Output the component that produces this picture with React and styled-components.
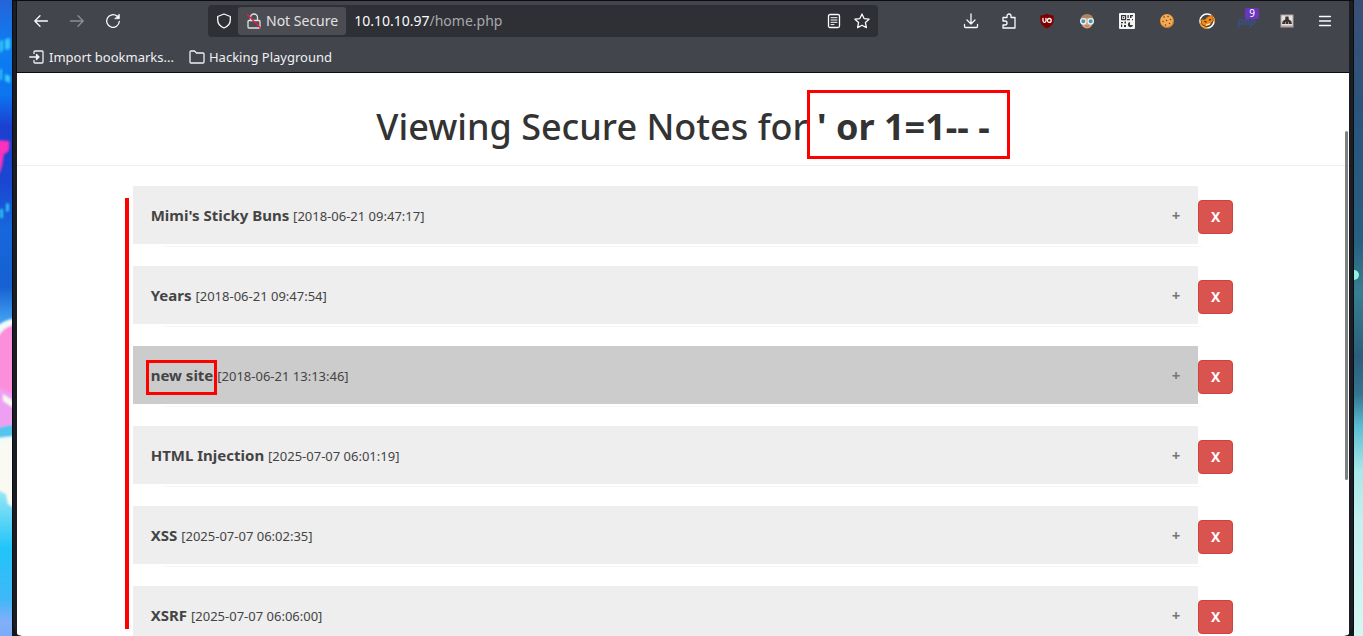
import React from "react";
import styled, { createGlobalStyle } from "styled-components";

const Global = createGlobalStyle`
  * { box-sizing: border-box; }
  body { margin: 0; font-family: "Noto Sans", "Open Sans", sans-serif; }
`;

const Desktop = styled.div`
  display: flex;
  height: 100vh;
  overflow: hidden;
  background: #14171d;
`;

const Wallpaper = styled.svg`
  flex: none;
  width: ${(p) => p.$width}px;
  height: 100%;
  display: block;
`;

const Browser = styled.div`
  flex: 1;
  min-width: 0;
  display: flex;
  flex-direction: column;
  overflow: hidden;
  border: solid #0c0d11;
  border-width: 1px 1px 0;
  border-radius: 0 0 10px 10px;
  background: #1a1d24;
  padding: 0 4px 0 3px;
`;

const Chrome = styled.header`
  flex: none;
  background: #42454c;
  border: solid #0c0d11;
  border-width: 0 0 1px 1px;
  color: #fbfbfe;
`;

const Toolbar = styled.nav`
  display: flex;
  align-items: center;
  height: 40px;
  padding: 0 12px;
`;

const NavGroup = styled.div`
  display: flex;
  gap: 12px;
  width: 179px;
`;

const ToolButton = styled.button`
  position: relative;
  display: grid;
  flex: none;
  place-items: center;
  width: 24px;
  height: 24px;
  padding: 0;
  border: 0;
  background: none;
  color: inherit;
  opacity: ${(p) => (p.disabled ? 0.4 : 1)};
`;

const Glyph = styled.svg`
  display: block;
  flex: none;
  width: 16px;
  height: 16px;
  fill: none;
  stroke: currentColor;
  stroke-width: 1.3;
  stroke-linecap: round;
  stroke-linejoin: round;
`;

const AddressBar = styled.div`
  display: flex;
  align-items: center;
  flex: 0 1 670px;
  height: 32px;
  padding: 0 4px;
  border-radius: 4px;
  background: #2f3036;
`;

const Security = styled.button`
  display: flex;
  align-items: center;
  gap: 4px;
  height: 28px;
  margin-left: 2px;
  padding: 0 8px;
  border: 0;
  border-radius: 3px;
  background: #4c4d52;
  color: #e2e2e5;
  font: 14px/20px "Noto Sans", sans-serif;
  white-space: nowrap;
`;

const Url = styled.div`
  flex: 1;
  min-width: 0;
  padding-left: 8px;
  font-size: 14px;
  line-height: 20px;
  color: #a8a8ad;
  white-space: nowrap;
  span { color: #fbfbfe; }
`;

const ToolGroup = styled.div`
  display: flex;
  align-items: center;
  gap: ${(p) => p.$gap}px;
`;

const WindowTools = styled(ToolGroup)`
  margin-left: auto;
`;

const PhpMark = styled.span`
  color: #3d4d8c;
  font: italic bold 10px/14px "Noto Sans", sans-serif;
`;

const Count = styled.span`
  position: absolute;
  top: -1px;
  left: 10px;
  width: 14px;
  border-radius: 2px;
  background: #6b35c0;
  color: #fff;
  font: 10px/11px "Noto Sans", sans-serif;
`;

const Bookmarks = styled.nav`
  display: flex;
  align-items: center;
  gap: 15px;
  height: 31px;
  padding: 0 12px;
`;

const Bookmark = styled.a`
  display: flex;
  align-items: center;
  gap: 4px;
  color: #f0f0f3;
  font-size: 13px;
  line-height: 20px;
  text-decoration: none;
`;

const Page = styled.main`
  position: relative;
  flex: 1;
  min-height: 0;
  overflow: hidden;
  margin-left: 1px;
  background: #fff;
  color: #333;
`;

const ScrollThumb = styled.div`
  position: absolute;
  top: 58px;
  right: 1px;
  width: 3px;
  height: 62%;
  border-radius: 2px;
  background: #7f8082;
`;

const PageHeader = styled.div`
  padding: 34px 0 19px;
  border-bottom: 1px solid #eee;
  text-align: center;
`;

const Title = styled.h1`
  margin: 0;
  font-size: 36px;
  line-height: 39px;
  font-weight: 500;
`;

const Marked = styled.span`
  position: relative;
  display: inline-block;
  font-weight: bold;
  &::after {
    content: "";
    position: absolute;
    inset: ${(p) => p.$inset};
    border: 3px solid #f00;
  }
`;

const Notes = styled.ul`
  position: relative;
  margin: 20px 0 0;
  padding: 0;
  list-style: none;
  &::before {
    content: "";
    position: absolute;
    top: 12px;
    left: 108px;
    width: 4px;
    height: 431px;
    background: #f00;
  }
`;

const Note = styled.li`
  display: flex;
  justify-content: center;
  align-items: flex-start;
  height: 80px;
`;

const NoteBody = styled.div`
  width: 80%;
`;

const Accordion = styled.button`
  display: flex;
  align-items: center;
  width: 100%;
  height: 58px;
  padding: 0 18px;
  border: 0;
  background: ${(p) => (p.$active ? "#ccc" : "#eee")};
  color: #444;
  font: 15px/20px "Noto Sans", sans-serif;
  text-align: left;
  white-space: pre;
  small { font-size: 13px; }
  i {
    margin-left: auto;
    color: #777;
    font: bold 15px/20px "Noto Sans", sans-serif;
  }
`;

const PanelEdge = styled.div`
  height: 1px;
  margin: 2px -4px 0 31px;
  background: #f7f7f7;
`;

const Delete = styled.button`
  flex: none;
  width: 35px;
  height: 34px;
  margin-top: 14px;
  padding: 0;
  border: 1px solid #d43f3a;
  border-radius: 4px;
  background: #d9534f;
  color: #fff;
  font: bold 14px/20px "Noto Sans", sans-serif;
`;

const notes = [
  ["Mimi's Sticky Buns", "2018-06-21 09:47:17"],
  ["Years", "2018-06-21 09:47:54"],
  ["new site", "2018-06-21 13:13:46"],
  ["HTML Injection", "2025-07-07 06:01:19"],
  ["XSS", "2025-07-07 06:02:35"],
  ["XSRF", "2025-07-07 06:06:00"],
];

const LeftWallpaper = () => (
  <Wallpaper $width={12} viewBox="0 0 12 636" preserveAspectRatio="none" aria-hidden="true">
    <defs>
      <linearGradient id="sky" x1="0" y1="0" x2="0" y2="1">
        <stop offset="0" stopColor="#2563d8" />
        <stop offset=".07" stopColor="#0f7df2" />
        <stop offset=".15" stopColor="#0b74ee" />
        <stop offset=".2" stopColor="#1c3fd0" />
        <stop offset=".29" stopColor="#1a48d2" />
        <stop offset=".36" stopColor="#1767dc" />
        <stop offset=".45" stopColor="#1560d2" />
        <stop offset=".5" stopColor="#3f9bee" />
      </linearGradient>
      <linearGradient id="lower" x1="0" y1="0" x2="0" y2="1">
        <stop offset="0" stopColor="#9be8f5" />
        <stop offset=".35" stopColor="#22c4fa" />
        <stop offset=".65" stopColor="#3fb8f8" />
        <stop offset=".78" stopColor="#84aef8" />
        <stop offset="1" stopColor="#6aa8fa" />
      </linearGradient>
      <filter id="soft" x="-1" y="-.1" width="3" height="1.2"><feGaussianBlur stdDeviation=".8" /></filter>
    </defs>
    <rect width="12" height="636" fill="url(#sky)" />
    <g filter="url(#soft)">
      <path d="M0 41l3-1v10l-3 3zM5 40q2-3 5-1v9q-2 3-5 1zM0 69h2v11H0zM5 74l5 2v7l-5-2z" fill="#35cbfa" />
      <path d="M-4 140l13 1q1 6-1 11l-4 2-2 12-2 7h-4z" fill="#fb30bd" />
      <path d="M0 209h3v9H0zM6 203l3 1v7l-3 1z" fill="#2cc4f5" />
      <path d="M-4 327q7-7 20-9v132H-4z" fill="#effcf8" />
      <path d="M-4 340q8-15 20-15v101H-4z" fill="#fb8fdc" />
      <path d="M-4 386l20 10v36H-4z" fill="#eda0f2" />
      <path d="M3 394l12 8v7l-12-8z" fill="#f8f8ef" />
      <path d="M-4 428l20-4v12l-20 2z" fill="#54c4ee" />
      <path d="M-4 446l20-8v210H-4z" fill="#faf9f2" />
      <path d="M-4 489l10 5 2 10 8 5v150H-4z" fill="url(#lower)" />
    </g>
  </Wallpaper>
);

const RightWallpaper = () => (
  <Wallpaper $width={9} viewBox="0 0 9 636" preserveAspectRatio="none" aria-hidden="true">
    <defs>
      <linearGradient id="dusk" x1="0" y1="0" x2="0" y2="1">
        <stop offset="0" stopColor="#3b4f76" />
        <stop offset=".2" stopColor="#29567d" />
        <stop offset=".38" stopColor="#276080" />
        <stop offset=".46" stopColor="#387f92" />
        <stop offset=".56" stopColor="#2b5e7c" />
        <stop offset=".62" stopColor="#347590" />
        <stop offset=".67" stopColor="#59bed3" />
        <stop offset=".74" stopColor="#a9e8e9" />
        <stop offset=".82" stopColor="#c4f0f0" />
        <stop offset="1" stopColor="#d5f7f2" />
      </linearGradient>
    </defs>
    <rect width="9" height="636" fill="url(#dusk)" />
    <circle cx="0" cy="275" r="5" fill="#90f2e1" />
  </Wallpaper>
);

const Tool = ({ label, disabled, children }) => (
  <ToolButton type="button" aria-label={label} disabled={disabled}>
    {children}
  </ToolButton>
);

export default function App() {
  return (
    <>
      <Global />
      <Desktop>
        <LeftWallpaper />
        <Browser>
          <Chrome>
            <Toolbar>
              <NavGroup>
                <Tool label="Back"><Glyph viewBox="0 0 16 16"><path d="M14.5 8H2M7 2.8L1.8 8 7 13.2" /></Glyph></Tool>
                <Tool label="Forward" disabled><Glyph viewBox="0 0 16 16"><path d="M1.5 8H14M9 2.8L14.2 8 9 13.2" /></Glyph></Tool>
                <Tool label="Reload"><Glyph viewBox="0 0 16 16"><path d="M14.3 8.5A6.3 6.3 0 1 1 12 3.1" /><path d="M14.3 1.5v4.2h-4.2z" fill="currentColor" strokeWidth=".8" /></Glyph></Tool>
              </NavGroup>
              <AddressBar>
                <Tool label="Tracking protection"><Glyph viewBox="0 0 16 16"><path d="M8 1L14.3 3.5V7q0 5.5-6.3 8Q1.7 12.5 1.7 7V3.5z" /></Glyph></Tool>
                <Security type="button">
                  <Glyph viewBox="0 0 16 16"><path d="M4.500 6.500V4.500a3.500 3.500 0 0 1 7 0v3M3 7.500h10a1 1 0 0 1 1 1v5.500a1 1 0 0 1-1 1H3a1 1 0 0 1-1-1V8.500a1 1 0 0 1 1-1z" /><path d="M1.500 1.500l13 13.500" stroke="#f0174f" /></Glyph>
                  Not Secure
                </Security>
                <Url><span>10.10.10.97</span>/home.php</Url>
                <ToolGroup $gap={4}>
                  <Tool label="Reader view"><Glyph viewBox="0 0 16 16"><rect x="2.500" y="1.500" width="11" height="13" rx="1.500" /><path d="M5 4.700h6M5 7h6M5 9.300h6M5 11.600h3" strokeWidth="1" /></Glyph></Tool>
                  <Tool label="Bookmark this page"><Glyph viewBox="0 0 16 16"><path d="M8 1l2.100 4.600 5 .6-3.700 3.400 1 5L8 12.200l-4.400 2.400 1-5L.9 6.200l5-.6z" /></Glyph></Tool>
                </ToolGroup>
              </AddressBar>
              <WindowTools $gap={14}>
                <Tool label="Downloads"><Glyph viewBox="0 0 16 16"><path d="M8 1v10M4 7l4 4 4-4M1.500 11.500v2a1 1 0 0 0 1 1h11a1 1 0 0 0 1-1v-2" /></Glyph></Tool>
                <Tool label="Extensions"><Glyph viewBox="0 0 16 16"><path d="M2 4.500h4V3a2 2 0 0 1 4 0v1.500h4V15H2v-3h2a2 2 0 0 0 0-4H2z" /></Glyph></Tool>
                <ToolGroup $gap={16}>
                  <Tool label="uBlock Origin"><Glyph viewBox="0 0 16 16"><path d="M8 .8Q11 2.500 14.700 2.500V7q0 5.500-6.700 8.500Q1.300 12.500 1.300 7V2.500Q5 2.500 8 .8z" fill="#800000" stroke="none" /><path d="M4 5.500v2.300a1.500 1.500 0 0 0 3 0V5.500" stroke="#fff" /><circle cx="10.300" cy="7.400" r="1.900" stroke="#fff" /></Glyph></Tool>
                  <Tool label="Profile switcher"><Glyph viewBox="0 0 16 16"><ellipse cx="8" cy="8.500" rx="6" ry="7" fill="#dba27d" stroke="none" /><path d="M1.500 7.500Q1.500 1 8 1t6.500 6.500Q12 4.500 8 5 4 4.500 1.500 7.500z" fill="#a98562" stroke="none" /><circle cx="4.300" cy="8.300" r="2.700" fill="#4f98ae" stroke="#e8f4f5" /><circle cx="11.700" cy="8.300" r="2.700" fill="#4f98ae" stroke="#e8f4f5" /><path d="M6.500 13h3" stroke="#b96a55" strokeWidth="1" /></Glyph></Tool>
                  <Tool label="QR code"><Glyph viewBox="0 0 16 16"><rect width="16" height="16" rx="1" fill="#f4f4f4" stroke="none" /><path d="M2.600 2.600h4v4h-4z" stroke="#333" strokeWidth="1.200" /><path d="M4 4h1.200v1.200H4zM8.500 2h1.200v3H8.500zM8 6h3v1.200H8zM11 2h3v1.200h-1.500V5H11zM13 6h1v1.200h-1zM2 9h2v1.200H2zM5.500 8.500h1.500v2H5.500zM2 11.500h1.200v2.500H2zM5 12h2v2H5zM11 9a2.600 2.600 0 1 0 3 3h-3z" fill="#333" stroke="none" /></Glyph></Tool>
                  <Tool label="Cookie editor"><Glyph viewBox="0 0 16 16"><circle cx="8" cy="8" r="7" fill="#d98332" stroke="none" /><circle cx="7.700" cy="7.500" r="6.200" fill="#f0ab55" stroke="none" /><path d="M5 4h.2M9 3.500h.1M11.500 6.500h.1M7.500 7.500h.1M4 8.500h.1M10.500 10.500h.1M6.500 12h.1" stroke="#7e431c" strokeWidth="1.500" /></Glyph></Tool>
                  <Tool label="Proxy"><Glyph viewBox="0 0 16 16"><circle cx="8" cy="8" r="7" stroke="#fff" strokeWidth="1.600" /><path d="M1.500 10.500A7 7 0 0 0 8 15M15 8a7 7 0 0 0-2.500-5.300" stroke="#f08a15" strokeWidth="1.800" strokeDasharray="3 2" /><path d="M2 6.500l4 0 3-3 4.500-1 .5 5-3 4.500-4 1.500-4-2.500z" fill="#f18a16" stroke="#8f4d08" strokeWidth=".5" /><path d="M6 8.500l1 .5M10.500 7l1-.5" stroke="#222" /><path d="M7.500 12l3-1" stroke="#fff" /></Glyph></Tool>
                  <Tool label="PHP tracker"><PhpMark>php</PhpMark><Count>9</Count></Tool>
                  <Tool label="User agent"><Glyph viewBox="0 0 16 16"><rect x="1.500" y="1.500" width="13" height="13" fill="#b0a49d" stroke="none" /><rect x="2.500" y="2.500" width="11" height="10" fill="#e6dfdb" stroke="none" /><path d="M6.500 3.500h3l.3 3 2.400 1.500.8 3H3l.8-3 2.400-1.500z" fill="#3a3535" stroke="none" /><path d="M6.500 9.500v1M9.500 9.500v1" stroke="#a79c96" strokeWidth="1" /></Glyph></Tool>
                </ToolGroup>
                <Tool label="Menu"><Glyph viewBox="0 0 16 16"><path d="M2.500 3.500h11M2.500 8h11M2.500 12.500h11" /></Glyph></Tool>
              </WindowTools>
            </Toolbar>
            <Bookmarks>
              <Bookmark href="#import"><Glyph viewBox="0 0 16 16"><path d="M5 4.500V3a1 1 0 0 1 1-1h7a1 1 0 0 1 1 1v10a1 1 0 0 1-1 1H6a1 1 0 0 1-1-1v-1.500M.7 8H10M7.500 5.500L10 8l-2.500 2.500z" /></Glyph>Import bookmarks...</Bookmark>
              <Bookmark href="#playground"><Glyph viewBox="0 0 16 16"><path d="M1 3a1 1 0 0 1 1-1h3.500l2 2H14a1 1 0 0 1 1 1v8a1 1 0 0 1-1 1H2a1 1 0 0 1-1-1z" /></Glyph>Hacking Playground</Bookmark>
            </Bookmarks>
          </Chrome>
          <Page>
            <PageHeader>
              <Title>Viewing Secure Notes for <Marked $inset="-17px -20px -13px -10px">' or 1=1-- -</Marked></Title>
            </PageHeader>
            <Notes>
              {notes.map(([name, date]) => {
                const active = name === "new site";
                return (
                  <Note key={name}>
                    <NoteBody>
                      <Accordion type="button" $active={active}>
                        <span>{active ? <Marked $inset="-5px -4px -10px -5px">{name}</Marked> : <b>{name}</b>} <small>[{date}]</small></span>
                        <i>+</i>
                      </Accordion>
                      <PanelEdge />
                    </NoteBody>
                    <Delete type="button" aria-label={"Delete " + name}>X</Delete>
                  </Note>
                );
              })}
            </Notes>
            <ScrollThumb />
          </Page>
        </Browser>
        <RightWallpaper />
      </Desktop>
    </>
  );
}
